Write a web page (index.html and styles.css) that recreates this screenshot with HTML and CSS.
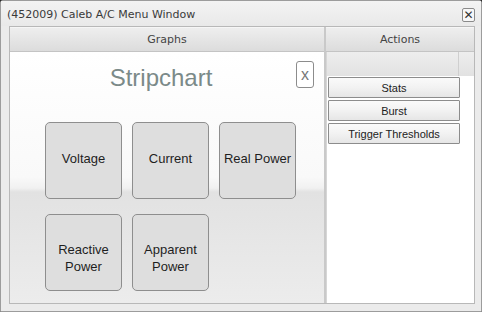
FILE: index.html
```html
<!DOCTYPE html>
<html lang="en">
<head>
    <meta charset="UTF-8">
    <title>(452009) Caleb A/C Menu Window</title>
    <link rel="stylesheet" href="styles.css">
</head>
<body>
    <div class="window">
        <div class="titlebar">
            <span class="title">(452009) Caleb A/C Menu Window</span>
            <button class="close-btn">&#x2715;</button>
        </div>

        <div class="panel">
            <div class="graphs">
                <div class="header">Graphs</div>
                <div class="graphs-body">
                    <div class="chart-title">Stripchart</div>
                    <button class="dismiss-btn">x</button>
                    <div class="graph-grid">
                        <button class="graph-btn">Voltage</button>
                        <button class="graph-btn">Current</button>
                        <button class="graph-btn">Real Power</button>
                        <button class="graph-btn two-line">Reactive<br>Power</button>
                        <button class="graph-btn two-line">Apparent<br>Power</button>
                    </div>
                </div>
            </div>

            <div class="actions">
                <div class="header">Actions</div>
                <div class="table-head">
                    <div class="cell-main"></div>
                    <div class="cell-end"></div>
                </div>
                <div class="action-list">
                    <button class="action-btn">Stats</button>
                    <button class="action-btn">Burst</button>
                    <button class="action-btn">Trigger Thresholds</button>
                </div>
            </div>
        </div>
    </div>
</body>
</html>
```

FILE: styles.css
```css
body {
    margin: 0;
    padding: 0;
    background: #2a2a2a;
}
.window {
    width: 482px;
    height: 312px;
    box-sizing: border-box;
    border: 1px solid #9c9c9c;
    border-radius: 3px 3px 0 0;
    background: #ebebeb;
    display: flex;
    flex-direction: column;
}
.titlebar {
    height: 25px;
    display: flex;
    align-items: center;
    justify-content: space-between;
    padding: 0 6px 0 6px;
    background: linear-gradient(to bottom, #f3f3f3, #e9e9e9);
}
.title {
    font-family: "DejaVu Sans", sans-serif;
    font-size: 11px;
    color: #3a3a3a;
    margin-top: 1px;
}
.close-btn {
    width: 13px;
    height: 14px;
    padding: 0;
    margin-top: 2px;
    border: 1px solid #8a8a8a;
    border-radius: 2px;
    background: #f7f7f7;
    font-family: "DejaVu Sans", sans-serif;
    font-size: 12px;
    line-height: 12px;
    color: #333;
}
.panel {
    margin: 0 6px 0 8px;
    height: 278px;
    box-sizing: border-box;
    border: 1px solid #b8b8b8;
    display: flex;
}
.header {
    height: 25px;
    box-sizing: border-box;
    border-bottom: 1px solid #c4c4c4;
    border-top: 1px solid #f6f6f6;
    background: linear-gradient(to bottom, #eeeeee, #dcdcdc);
    font-family: "DejaVu Sans", sans-serif;
    font-size: 11px;
    color: #444;
    text-align: center;
    line-height: 23px;
}
.graphs {
    width: 316px;
    box-sizing: border-box;
    border-right: 2px solid #c9c9c9;
    display: flex;
    flex-direction: column;
}
.graphs-body {
    flex: 1;
    position: relative;
    background: linear-gradient(to bottom, #ffffff 0, #f9f9f9 125px, #f1f1f1 136px, #e2e2e2 140px, #ececec 100%);
}
.chart-title {
    padding: 12px 12px 0 0;
    font-family: "Liberation Sans", sans-serif;
    font-size: 24px;
    line-height: 28px;
    color: #7b8a89;
    text-align: center;
}
.dismiss-btn {
    position: absolute;
    top: 9px;
    right: 10px;
    width: 18px;
    height: 27px;
    padding: 0;
    border: 1px solid #8c8c8c;
    border-radius: 3px;
    background: #fff;
    font-family: "Liberation Sans", sans-serif;
    font-size: 16px;
    color: #777;
}
.graph-grid {
    display: grid;
    grid-template-columns: repeat(3, 77px);
    grid-auto-rows: 77px;
    column-gap: 10px;
    row-gap: 15px;
    margin: 30px 0 0 35px;
}
.graph-btn {
    padding: 0 0 4px 0;
    border: 1px solid #8e8e8e;
    border-radius: 5px;
    background: #dedede;
    font-family: "Liberation Sans", sans-serif;
    font-size: 13px;
    line-height: 17px;
    color: #1e1e1e;
}
.graph-btn.two-line {
    padding: 10px 0 0 0;
}
.actions {
    flex: 1;
    display: flex;
    flex-direction: column;
}
.table-head {
    height: 24px;
    display: flex;
    background: linear-gradient(to bottom, #eeeeee, #e2e2e2);
    border-left: 1px solid #d6d6d6;
}
.cell-main {
    flex: 1;
}
.cell-end {
    width: 15px;
    border-left: 1px solid #cfcfcf;
}
.action-list {
    flex: 1;
    background: #fff;
    border-left: 1px solid #d6d6d6;
    padding: 1px 0 0 1px;
    display: flex;
    flex-direction: column;
    gap: 2px;
}
.action-btn {
    width: 132px;
    height: 21px;
    padding: 0;
    border: 1px solid #8c8c8c;
    border-radius: 1px;
    background: linear-gradient(to bottom, #fafafa, #f2f2f2 50%, #e6e6e6);
    font-family: "Liberation Sans", sans-serif;
    font-size: 11px;
    color: #222;
}
```
